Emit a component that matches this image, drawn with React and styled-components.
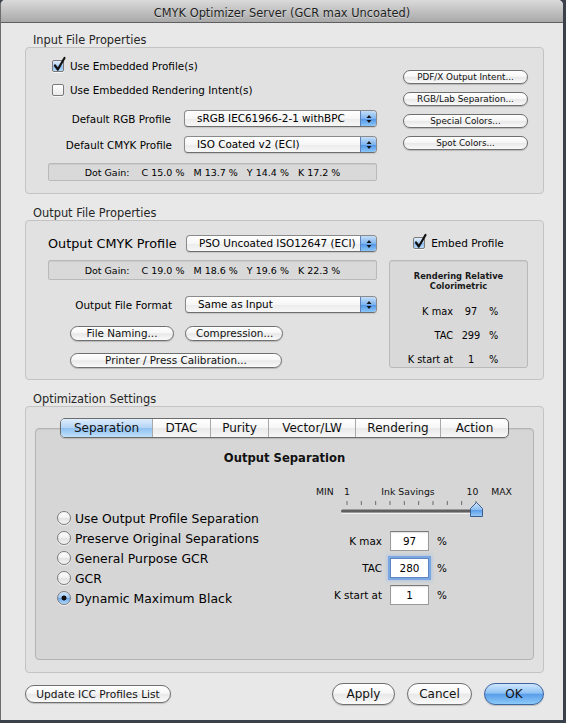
import React from "react";
import styled, { createGlobalStyle } from "styled-components";

const GlobalStyle = createGlobalStyle`
  html, body { margin: 0; padding: 0; }
  body {
    background: #3a414b;
    font-family: "DejaVu Sans", "Liberation Sans", sans-serif;
    color: #000;
  }
  * { box-sizing: border-box; }
`;

/* window chrome */
const Window = styled.div`
  width: 563px;
  height: 720px;
  background: #e8e8e8;
  border-left: 1px solid #6d6d6d;
  border-radius: 5px 5px 0 0;
  overflow: hidden;
  display: flex;
  flex-direction: column;
`;

const TitleBar = styled.div`
  height: 23px;
  flex: none;
  display: flex;
  align-items: center;
  justify-content: center;
  padding-top: 3px;
  background: linear-gradient(#dadada, #a9a9a9);
  border-bottom: 1px solid #5f5f5f;
  font-size: 11.4px;
  color: #1e1e1e;
  text-shadow: 0 1px 0 rgba(255, 255, 255, 0.45);
`;

const Body = styled.div`
  flex: 1;
  display: flex;
  flex-direction: column;
  padding: 10px 19px 0 24px;
`;

const Legend = styled.div`
  height: 14px;
  line-height: 14px;
  font-size: 11.4px;
  color: #262626;
  padding-left: 8px;
  margin-top: ${(p) => p.$mt || 0}px;
`;

const Frame = styled.div`
  height: ${(p) => p.$h}px;
  flex: none;
  background: #e1e1e1;
  border: 1px solid #c3c3c3;
  border-radius: 4px;
`;

const PropsGroup = styled(Frame)`
  display: grid;
  grid-template-columns: 329px 1fr;
  column-gap: ${(p) => p.$gap}px;
  padding: 0 15px 0 22px;
`;

const Column = styled.div`
  display: flex;
  flex-direction: column;
  padding-top: ${(p) => p.$pt || 0}px;
  gap: ${(p) => p.$gap || 0}px;
  align-items: ${(p) => p.$align || "stretch"};
`;

/* checkbox */
const CheckRow = styled.label`
  display: flex;
  align-items: center;
  gap: 6px;
  height: 20px;
  margin-left: ${(p) => p.$ml ?? 4}px;
  margin-top: ${(p) => p.$mt || 0}px;
  font-size: ${(p) => p.$fs || 10.4}px;
  align-self: ${(p) => p.$self || "auto"};
`;

const CheckBox = styled.span`
  position: relative;
  width: 12px;
  height: 12px;
  flex: none;
  border: 1px solid #7a7a7a;
  border-radius: 2px;
  background: ${(p) =>
    p.$on
      ? "linear-gradient(#e2eefb, #a9cdf3 50%, #86b8ee 51%, #b9dbfa)"
      : "linear-gradient(#ffffff, #e9e9e9)"};
  box-shadow: 0 1px 0 rgba(255, 255, 255, 0.7);
`;

const Tick = styled.svg`
  position: absolute;
  left: 0;
  top: -5px;
  overflow: visible;
`;

const Checkbox = ({ on, children, ...rest }) => (
  <CheckRow {...rest}>
    <CheckBox $on={on}>
      {on && (
        <Tick width="14" height="16" viewBox="0 0 14 16">
          <path d="M2 9.5 L4.8 13.5 L11.5 2" fill="none" stroke="#111" strokeWidth="2.2" strokeLinecap="round" strokeLinejoin="round" />
        </Tick>
      )}
    </CheckBox>
    <span>{children}</span>
  </CheckRow>
);

/* popup menus */
const FieldRow = styled.div`
  display: grid;
  grid-template-columns: ${(p) => p.$label}px 1fr;
  column-gap: ${(p) => p.$gap}px;
  align-items: center;
  height: 17px;
  margin-top: ${(p) => p.$mt || 0}px;
`;

const FieldLabel = styled.span`
  font-size: ${(p) => p.$fs || 10.4}px;
  text-align: ${(p) => (p.$left ? "left" : "right")};
  white-space: nowrap;
`;

const PopupBox = styled.div`
  height: 17px;
  display: flex;
  border: 1px solid #8a8a8a;
  border-bottom-color: #6e6e6e;
  border-radius: 4px;
  overflow: hidden;
  background: linear-gradient(#ffffff, #f6f6f6 50%, #ebebeb 51%, #f7f7f7);
  box-shadow: 0 1px 1px rgba(0, 0, 0, 0.12);
`;

const PopupText = styled.span`
  flex: 1;
  font-size: 10.4px;
  line-height: 15px;
  padding-left: 12px;
  white-space: nowrap;
`;

const Stepper = styled.span`
  width: 16px;
  flex: none;
  display: flex;
  align-items: center;
  justify-content: center;
  border-left: 1px solid #5b80b8;
  background: linear-gradient(#c4def9, #7fb4ee 50%, #4f93e6 51%, #8cc6f8);
`;

const Popup = ({ children }) => (
  <PopupBox>
    <PopupText>{children}</PopupText>
    <Stepper>
      <svg width="6" height="10" viewBox="0 0 6 10">
        <path d="M3 1 L5.5 4 H0.5 Z M3 9 L5.5 6 H0.5 Z" fill="#151515" />
      </svg>
    </Stepper>
  </PopupBox>
);

/* read-only info wells */
const Well = styled.div`
  height: ${(p) => p.$h}px;
  margin-top: ${(p) => p.$mt || 0}px;
  display: flex;
  align-items: center;
  justify-content: center;
  gap: 9px;
  font-size: 9.5px;
  background: #d9d9d9;
  border: 1px solid #b9b9b9;
  border-radius: 2px;
  box-shadow: inset 0 1px 1px rgba(0, 0, 0, 0.07);
`;

const GainHead = styled.span`
  margin-right: 3px;
`;

const DotGain = ({ values, ...rest }) => (
  <Well {...rest}>
    <GainHead>Dot Gain:</GainHead>
    {values.map(([ink, v]) => (
      <span key={ink}>
        {ink} {v} %
      </span>
    ))}
  </Well>
);

/* aqua push buttons */
const sizes = {
  mini: { h: 14, fs: 8.8 },
  small: { h: 15, fs: 10.4 },
  medium: { h: 18, fs: 10.6 },
  large: { h: 22, fs: 12 },
};

const Pill = styled.button`
  height: ${(p) => sizes[p.$size].h}px;
  width: ${(p) => (p.$w ? `${p.$w}px` : "auto")};
  padding: 0 10px;
  font-family: inherit;
  font-size: ${(p) => sizes[p.$size].fs}px;
  line-height: 1;
  color: #111;
  border: 1px solid #6f6f6f;
  border-radius: 11px;
  background: ${(p) =>
    p.$primary
      ? "linear-gradient(#cfe6fd, #8fc2f4 45%, #5a9eea 52%, #8ccaf9)"
      : "linear-gradient(#ffffff, #f7f7f7 45%, #e8e8e8 52%, #fafafa)"};
  border-color: ${(p) => (p.$primary ? "#3e64a0" : "#6f6f6f")};
  box-shadow: 0 1px 1px rgba(0, 0, 0, 0.18);
  white-space: nowrap;
  flex: none;
`;

const ButtonRow = styled.div`
  display: flex;
  gap: 11px;
  margin-left: 22px;
  margin-top: ${(p) => p.$mt || 0}px;
`;

/* rendering summary */
const RenderBox = styled.div`
  height: 108px;
  margin-top: 7px;
  padding-top: 10px;
  background: #d9d9d9;
  border: 1px solid #b9b9b9;
  border-radius: 3px;
  box-shadow: inset 0 1px 1px rgba(0, 0, 0, 0.06);
`;

const RenderTitle = styled.div`
  font-size: 8.3px;
  font-weight: bold;
  line-height: 10px;
  text-align: center;
  color: #1a1a1a;
`;

const StatGrid = styled.div`
  display: grid;
  grid-template-columns: 63px 36px 1fr;
  grid-auto-rows: 24px;
  align-items: center;
  margin-top: 8px;
  font-size: 9.8px;
`;

const StatLabel = styled.span`
  text-align: right;
  white-space: nowrap;
`;

const StatValue = styled.span`
  text-align: center;
`;

/* optimization tabs */
const OptGroup = styled(Frame)`
  display: flex;
  flex-direction: column;
  align-items: center;
  padding: 11px 9px 12px;
`;

const TabBar = styled.div`
  display: flex;
  height: 20px;
  margin-bottom: -10px;
  position: relative;
  z-index: 1;
  border: 1px solid #6c6c6c;
  border-radius: 5px;
  overflow: hidden;
  background: linear-gradient(#ffffff, #f6f6f6 50%, #e9e9e9 51%, #f7f7f7);
  box-shadow: 0 1px 1px rgba(0, 0, 0, 0.15);
`;

const Tab = styled.div`
  width: ${(p) => p.$w}px;
  display: flex;
  align-items: center;
  justify-content: center;
  font-size: 12px;
  color: #111;
  border-left: ${(p) => (p.$first ? "none" : "1px solid #a9a9a9")};
  background: ${(p) =>
    p.$active ? "linear-gradient(#deedfc, #b2d3f5 50%, #8fc0f1 51%, #bfe0fb)" : "transparent"};
`;

const Panel = styled.div`
  align-self: stretch;
  flex: 1;
  padding-top: 22px;
  background: #d6d6d6;
  border: 1px solid #b3b3b3;
  border-radius: 4px;
  box-shadow: inset 0 1px 1px rgba(0, 0, 0, 0.06);
`;

const PanelTitle = styled.div`
  height: 14px;
  line-height: 14px;
  text-align: center;
  font-size: 11.6px;
  font-weight: bold;
  color: #111;
`;

const PanelContent = styled.div`
  display: grid;
  grid-template-columns: 259px 196px;
  padding-left: 21px;
  margin-top: 20px;
`;

const RadioList = styled.div`
  margin-top: 23px;
  display: flex;
  flex-direction: column;
`;

const RadioRow = styled.label`
  display: flex;
  align-items: center;
  gap: 4px;
  height: 20px;
  font-size: 12.4px;
  white-space: nowrap;
`;

const RadioDot = styled.span`
  width: 14px;
  height: 14px;
  flex: none;
  border-radius: 50%;
  border: 1px solid #7b7b7b;
  background: ${(p) =>
    p.$on
      ? "radial-gradient(circle, #111 0 2.2px, transparent 2.8px), linear-gradient(#d8eafc, #95c2f1 50%, #6aa6eb 51%, #b0d8fa)"
      : "linear-gradient(#ffffff, #f1f1f1 50%, #e3e3e3 51%, #f4f4f4)"};
  box-shadow: 0 1px 0 rgba(255, 255, 255, 0.6);
`;

const SliderLabels = styled.div`
  display: grid;
  grid-template-columns: 27px 8px 114px 15px 32px;
  height: 14px;
  line-height: 14px;
  font-size: 9.3px;
  color: #111;
  & > span:nth-child(2),
  & > span:nth-child(3),
  & > span:nth-child(4) {
    text-align: center;
  }
  & > span:last-child {
    text-align: right;
  }
`;

const SliderTrack = styled.svg`
  display: block;
`;

const FieldGrid = styled.div`
  display: grid;
  grid-template-columns: 66px 39px auto;
  column-gap: 8px;
  row-gap: 7px;
  margin-top: 12px;
  align-items: center;
  font-size: 10.4px;
`;

const NumInput = styled.input`
  width: 39px;
  height: 20px;
  padding: 0;
  font-family: inherit;
  font-size: 10.4px;
  text-align: center;
  color: #000;
  background: #fff;
  border: 1px solid ${(p) => (p.$focus ? "#5f87c2" : "#9a9a9a")};
  border-top-color: ${(p) => (p.$focus ? "#5f87c2" : "#7a7a7a")};
  box-shadow: ${(p) =>
    p.$focus
      ? "0 0 0 2px rgba(112, 160, 228, 0.85), 0 0 3px 3px rgba(140, 185, 240, 0.5)"
      : "inset 0 1px 1px rgba(0, 0, 0, 0.12)"};
  outline: none;
`;

const Footer = styled.div`
  display: flex;
  align-items: center;
  gap: 12px;
  height: 22px;
  margin-top: 10px;
`;

const Spacer = styled.div`
  flex: 1;
`;

const tabs = [
  ["Separation", 91],
  ["DTAC", 58],
  ["Purity", 58],
  ["Vector/LW", 87],
  ["Rendering", 85],
  ["Action", 68],
];

const separations = [
  "Use Output Profile Separation",
  "Preserve Original Separations",
  "General Purpose GCR",
  "GCR",
  "Dynamic Maximum Black",
];

const tickXs = Array.from({ length: 10 }, (_, i) => 31 + i * 14.33);

const App = () => {
  return (
    <>
      <GlobalStyle />
      <Window>
        <TitleBar>CMYK Optimizer Server (GCR max Uncoated)</TitleBar>
        <Body>
          <Legend>Input File Properties</Legend>
          <PropsGroup $h={147} $gap={26}>
            <Column $pt={8}>
              <Checkbox on>Use Embedded Profile(s)</Checkbox>
              <Checkbox $mt={4}>Use Embedded Rendering Intent(s)</Checkbox>
              <FieldRow $label={123} $gap={13} $mt={10}>
                <FieldLabel>Default RGB Profile</FieldLabel>
                <Popup>sRGB IEC61966-2-1 withBPC</Popup>
              </FieldRow>
              <FieldRow $label={124} $gap={12} $mt={9}>
                <FieldLabel>Default CMYK Profile</FieldLabel>
                <Popup>ISO Coated v2 (ECI)</Popup>
              </FieldRow>
              <DotGain
                $h={18}
                $mt={10}
                values={[["C", "15.0"], ["M", "13.7"], ["Y", "14.4"], ["K", "17.2"]]}
              />
            </Column>
            <Column $pt={22} $gap={8}>
              <Pill $size="mini">PDF/X Output Intent...</Pill>
              <Pill $size="mini">RGB/Lab Separation...</Pill>
              <Pill $size="mini">Special Colors...</Pill>
              <Pill $size="mini">Spot Colors...</Pill>
            </Column>
          </PropsGroup>

          <Legend $mt={12}>Output File Properties</Legend>
          <PropsGroup $h={160} $gap={12}>
            <Column>
              <FieldRow $label={130} $gap={8} $mt={14}>
                <FieldLabel $fs={12.8} $left>
                  Output CMYK Profile
                </FieldLabel>
                <Popup>PSO Uncoated ISO12647 (ECI)</Popup>
              </FieldRow>
              <DotGain
                $h={20}
                $mt={8}
                values={[["C", "19.0"], ["M", "18.6"], ["Y", "19.6"], ["K", "22.3"]]}
              />
              <FieldRow $label={124} $gap={13} $mt={16}>
                <FieldLabel>Output File Format</FieldLabel>
                <Popup>Same as Input</Popup>
              </FieldRow>
              <ButtonRow $mt={13}>
                <Pill $size="small" $w={104}>File Naming...</Pill>
                <Pill $size="small" $w={98}>Compression...</Pill>
              </ButtonRow>
              <ButtonRow $mt={12}>
                <Pill $size="small" $w={212}>Printer / Press Calibration...</Pill>
              </ButtonRow>
            </Column>
            <Column $pt={12}>
              <Checkbox on $ml={0} $fs={10.5} $self="center">
                Embed Profile
              </Checkbox>
              <RenderBox>
                <RenderTitle>
                  Rendering Relative
                  <br />
                  Colorimetric
                </RenderTitle>
                <StatGrid>
                  <StatLabel>K max</StatLabel>
                  <StatValue>97</StatValue>
                  <span>%</span>
                  <StatLabel>TAC</StatLabel>
                  <StatValue>299</StatValue>
                  <span>%</span>
                  <StatLabel>K start at</StatLabel>
                  <StatValue>1</StatValue>
                  <span>%</span>
                </StatGrid>
              </RenderBox>
            </Column>
          </PropsGroup>

          <Legend $mt={12}>Optimization Settings</Legend>
          <OptGroup $h={267}>
            <TabBar>
              {tabs.map(([name, w], i) => (
                <Tab key={name} $w={w} $first={i === 0} $active={i === 0}>
                  {name}
                </Tab>
              ))}
            </TabBar>
            <Panel>
              <PanelTitle>Output Separation</PanelTitle>
              <PanelContent>
                <RadioList>
                  {separations.map((s, i) => (
                    <RadioRow key={s}>
                      <RadioDot $on={i === separations.length - 1} />
                      {s}
                    </RadioRow>
                  ))}
                </RadioList>
                <div>
                  <SliderLabels>
                    <span>MIN</span>
                    <span>1</span>
                    <span>Ink Savings</span>
                    <span>10</span>
                    <span>MAX</span>
                  </SliderLabels>
                  <SliderTrack width="196" height="20" viewBox="0 0 196 20">
                    <defs>
                      <linearGradient id="thumbFill" x1="0" y1="0" x2="0" y2="1">
                        <stop offset="0" stopColor="#d3e7fc" />
                        <stop offset="0.5" stopColor="#8dbff2" />
                        <stop offset="0.55" stopColor="#5c9de8" />
                        <stop offset="1" stopColor="#9bcdf8" />
                      </linearGradient>
                    </defs>
                    {tickXs.map((x) => (
                      <line key={x} x1={x} x2={x} y1="2" y2="6" stroke="#6a6a6a" strokeWidth="1" />
                    ))}
                    <rect x="25" y="10.5" width="137" height="3" rx="1.5" fill="#5f5f5f" />
                    <line x1="26" x2="161" y1="14.5" y2="14.5" stroke="#f2f2f2" strokeWidth="1" />
                    <path
                      d="M154.5 17.5 V9.5 L160.5 3.5 L166.5 9.5 V17.5 Z"
                      fill="url(#thumbFill)"
                      stroke="#3c5f93"
                      strokeWidth="1"
                      strokeLinejoin="round"
                    />
                  </SliderTrack>
                  <FieldGrid>
                    <StatLabel>K max</StatLabel>
                    <NumInput readOnly value="97" />
                    <span>%</span>
                    <StatLabel>TAC</StatLabel>
                    <NumInput readOnly value="280" $focus />
                    <span>%</span>
                    <StatLabel>K start at</StatLabel>
                    <NumInput readOnly value="1" />
                    <span>%</span>
                  </FieldGrid>
                </div>
              </PanelContent>
            </Panel>
          </OptGroup>

          <Footer>
            <Pill $size="medium" $w={146}>Update ICC Profiles List</Pill>
            <Spacer />
            <Pill $size="large" $w={63}>Apply</Pill>
            <Pill $size="large" $w={65}>Cancel</Pill>
            <Pill $size="large" $w={60} $primary>
              OK
            </Pill>
          </Footer>
        </Body>
      </Window>
    </>
  );
};

export default App;
